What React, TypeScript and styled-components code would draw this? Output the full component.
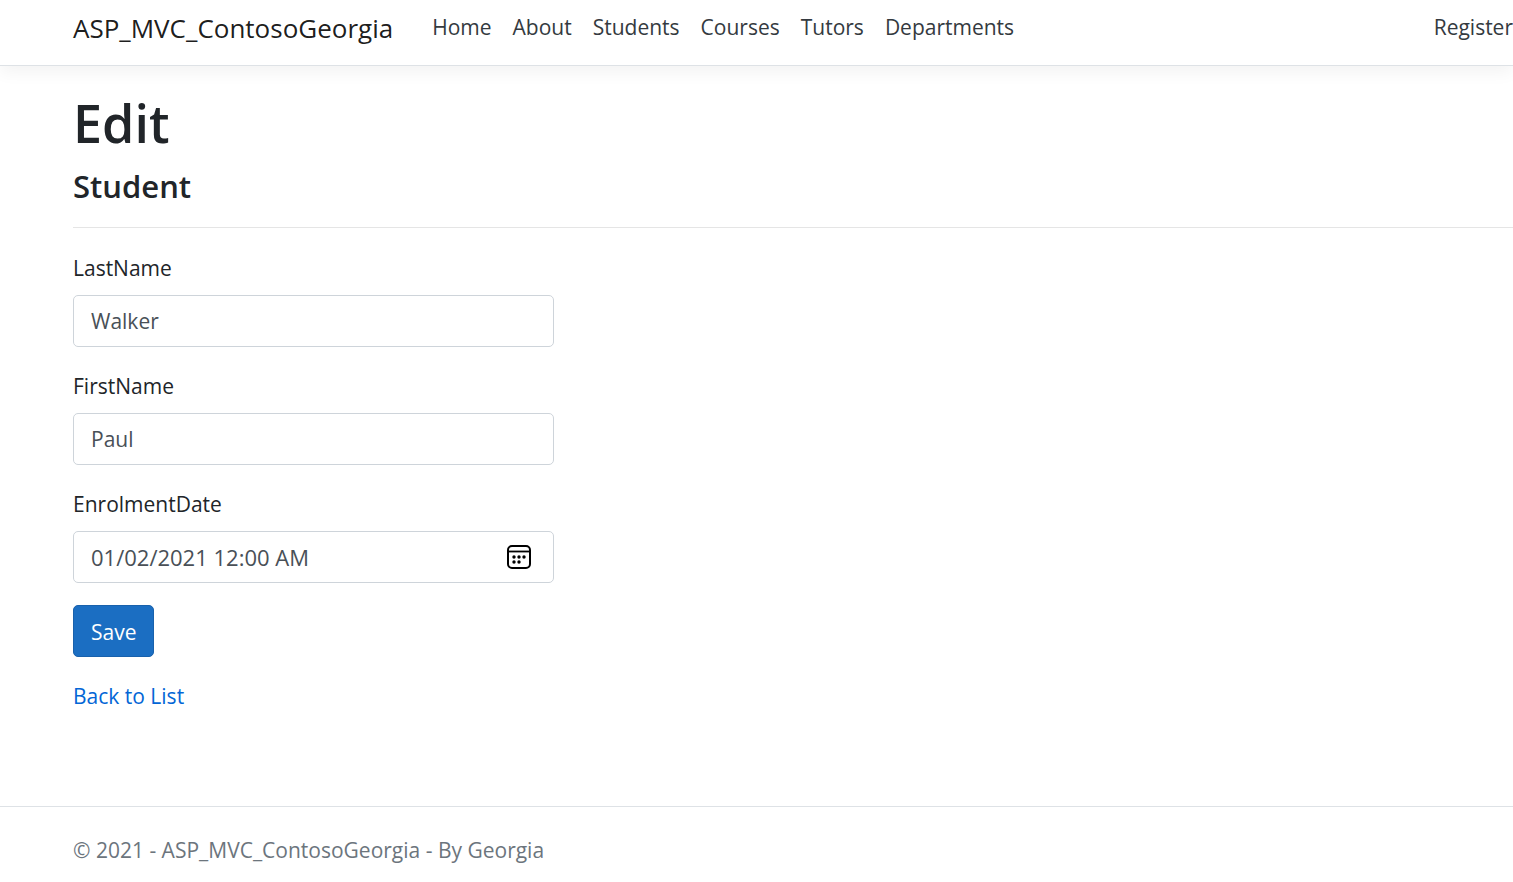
import React from "react";
import styled, { createGlobalStyle } from "styled-components";

const GlobalStyle = createGlobalStyle`
  *, *::before, *::after { box-sizing: border-box; }
  body {
    margin: 0;
    background: #fff;
    color: #212529;
    font-family: "Segoe UI", "Open Sans", "Noto Sans", sans-serif;
    font-size: 21px;
    line-height: 33px;
  }
`;

const Header = styled.header`
  padding: 0 0 9px 73px;
  border-bottom: 1px solid #dee2e6;
  box-shadow: 0 6px 16px rgba(0, 0, 0, 0.05);
`;

const Navbar = styled.nav`
  display: flex;
  align-items: center;
  min-height: 56px;
`;

const Brand = styled.a`
  margin-right: 39px;
  color: rgba(0, 0, 0, 0.9);
  font-size: 26px;
  text-decoration: none;
  white-space: nowrap;
`;

const NavList = styled.ul<{ $end?: boolean }>`
  display: flex;
  gap: 21px;
  margin: 0;
  margin-left: ${(p) => (p.$end ? "auto" : "0")};
  padding: 0 0 2px;
  list-style: none;
`;

const NavLink = styled.a`
  color: #343a40;
  text-decoration: none;
`;

const Main = styled.main`
  padding: 24px 0 93px 73px;
`;

const Title = styled.h1`
  margin: 0 0 10px;
  font-size: 52px;
  font-weight: 600;
  line-height: 66px;
`;

const Subtitle = styled.h4`
  margin: 0;
  font-size: 31px;
  font-weight: 600;
  line-height: 40px;
`;

const Divider = styled.hr`
  margin: 21px 0 23px;
  border: 0;
  border-top: 1px solid rgba(0, 0, 0, 0.1);
`;

const Form = styled.form`
  width: 33.4%;
  min-width: 320px;
`;

const Group = styled.div`
  margin-bottom: 22px;
`;

const Label = styled.label`
  display: block;
  padding-top: 1px;
  margin-bottom: 10px;
`;

const Field = styled.div`
  display: flex;
  align-items: center;
  height: 52px;
  padding: 0 17px;
  border: 1px solid #ced4da;
  border-radius: 5px;
`;

const Input = styled.input<{ $date?: boolean }>`
  flex: 1;
  min-width: 0;
  padding: 0;
  border: 0;
  outline: 0;
  background: none;
  color: #495057;
  font: inherit;
  font-size: ${(p) => (p.$date ? "22px" : "21px")};
`;

const PickerButton = styled.button`
  display: flex;
  margin: 0 5px 0 0;
  padding: 0;
  border: 0;
  background: none;
  color: #000;
`;

const SaveButton = styled.button`
  display: block;
  height: 52px;
  padding: 2px 17px 0;
  border: 1px solid #1861ac;
  border-radius: 5px;
  background: #1b6ec2;
  color: #fff;
  font: inherit;
`;

const BackLink = styled.a`
  display: inline-block;
  margin-top: 23px;
  color: #0366d6;
  text-decoration: none;
`;

const Footer = styled.footer`
  padding: 27px 0 15px 73px;
  border-top: 1px solid #dee2e6;
  color: #6c757d;
`;

const links = ["Home", "About", "Students", "Courses", "Tutors", "Departments"];

const CalendarIcon = () => (
  <svg width="24" height="24" viewBox="0 0 24 24" fill="none" aria-hidden="true">
    <rect x="1" y="1" width="22" height="22" rx="4" stroke="currentColor" strokeWidth="2" />
    <path d="M1 6.5h22" stroke="currentColor" strokeWidth="1.8" />
    <g fill="currentColor">
      <circle cx="7" cy="12" r="1.7" />
      <circle cx="12" cy="12" r="1.7" />
      <circle cx="17" cy="12" r="1.7" />
      <circle cx="7" cy="17" r="1.7" />
      <circle cx="12" cy="17" r="1.7" />
    </g>
  </svg>
);

export default function App() {
  return (
    <>
      <GlobalStyle />
      <Header>
        <Navbar>
          <Brand href="#">ASP_MVC_ContosoGeorgia</Brand>
          <NavList>
            {links.map((name) => (
              <li key={name}>
                <NavLink href="#">{name}</NavLink>
              </li>
            ))}
          </NavList>
          <NavList $end>
            <li>
              <NavLink href="#">Register</NavLink>
            </li>
          </NavList>
        </Navbar>
      </Header>
      <Main>
        <Title>Edit</Title>
        <Subtitle>Student</Subtitle>
        <Divider />
        <Form onSubmit={(e) => e.preventDefault()}>
          <Group>
            <Label htmlFor="LastName">LastName</Label>
            <Field>
              <Input id="LastName" type="text" defaultValue="Walker" />
            </Field>
          </Group>
          <Group>
            <Label htmlFor="FirstName">FirstName</Label>
            <Field>
              <Input id="FirstName" type="text" defaultValue="Paul" />
            </Field>
          </Group>
          <Group>
            <Label htmlFor="EnrolmentDate">EnrolmentDate</Label>
            <Field>
              <Input $date id="EnrolmentDate" type="text" defaultValue="01/02/2021 12:00 AM" />
              <PickerButton type="button" aria-label="Show date picker">
                <CalendarIcon />
              </PickerButton>
            </Field>
          </Group>
          <SaveButton type="submit">Save</SaveButton>
        </Form>
        <BackLink href="#">Back to List</BackLink>
      </Main>
      <Footer>© 2021 - ASP_MVC_ContosoGeorgia - By Georgia</Footer>
    </>
  );
}
